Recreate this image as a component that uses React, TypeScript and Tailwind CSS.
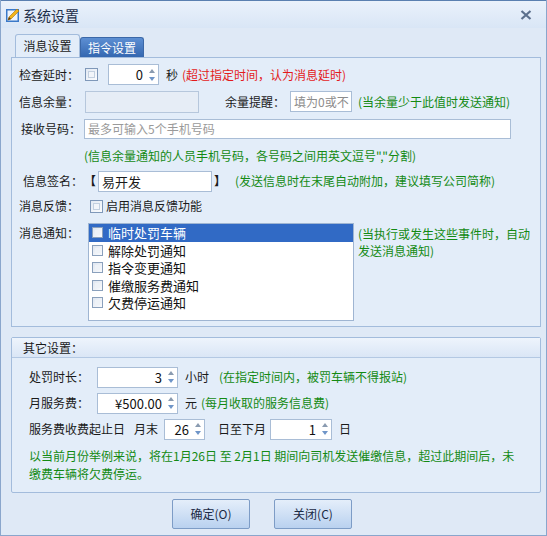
import React from 'react';

function Arrows() {
  return (
    <svg width="8" height="14" viewBox="0 0 8 14">
      <path d="M4 1 L7 5 L1 5 Z" fill="#8a9bb0" />
      <path d="M4 13 L7 9 L1 9 Z" fill="#6f95c8" />
    </svg>
  );
}

function Spin({ value, wClass }: { value: string; wClass: string }) {
  return (
    <div className={`flex h-[21px] items-stretch border border-[#a9bdd6] bg-white ${wClass}`}>
      <div className="flex flex-1 items-center justify-end pr-[3px] text-[13px] text-[#111]">{value}</div>
      <div className="flex w-[12px] items-center justify-center">
        <Arrows />
      </div>
    </div>
  );
}

function Check({ size }: { size: 'lg' | 'sm' }) {
  return size === 'lg' ? (
    <div className="flex h-[13px] w-[13px] items-center justify-center border border-[#7f98b9] bg-gradient-to-br from-[#e2e9f3] to-[#fbfcfe]">
      <div className="h-[7px] w-[7px] border border-[#c3d0e0] bg-[#f2f5fa]" />
    </div>
  ) : (
    <div className="flex h-[11px] w-[11px] items-center justify-center border border-[#8aa0bc] bg-gradient-to-br from-[#dfe6f0] to-[#fafbfd]">
      <div className="h-[5px] w-[5px] bg-[#eef2f7]" />
    </div>
  );
}

export default function App() {
  const items = ['临时处罚车辆', '解除处罚通知', '指令变更通知', '催缴服务费通知', '欠费停运通知'];
  return (
    <div className="relative h-[536px] w-[547px] overflow-hidden border-x border-b border-[#8aa6cc] bg-[#dfe9f6] font-['Noto_Sans_CJK_SC','Noto_Sans',sans-serif] text-[12px] leading-none text-[#1a1a1a]">
      {/* title bar */}
      <div className="flex h-[28px] items-center border-t border-[#5a7fb0] bg-gradient-to-b from-[#eaf1fb] to-[#d9e6f6] pl-[4px] pr-[14px]">
        <svg width="16" height="16" viewBox="0 0 16 16">
          <rect x="1" y="2" width="13" height="13" fill="#3a79c9" />
          <rect x="2.5" y="3.5" width="10" height="10" fill="#eef4fb" />
          <path d="M3 13 L4 10 L12 2 L14 4 L6 12 Z" fill="#f2b418" stroke="#a8700a" strokeWidth="0.6" />
          <path d="M3 13 L4 10 L6 12 Z" fill="#5a3b10" />
        </svg>
        <span className="ml-[2px] text-[14px] text-[#1e2f4a]">系统设置</span>
        <div className="flex-1" />
        <svg width="12" height="10" viewBox="0 0 12 10">
          <path d="M1.5 1 L10.5 9 M10.5 1 L1.5 9" stroke="#5b6f8c" strokeWidth="2.2" />
        </svg>
      </div>

      {/* tabs */}
      <div className="mt-[7px] flex h-[22px] items-end pl-[14px]">
        <div className="relative z-10 flex h-[23px] w-[65px] items-center justify-center rounded-t-[3px] border border-b-0 border-[#a3bcdc] bg-[#e3edf9] text-[12px] text-[#1a1a1a]">
          消息设置
        </div>
        <div className="flex h-[20px] w-[64px] items-center justify-center rounded-t-[3px] border border-b-0 border-[#3b68a8] bg-gradient-to-b from-[#5d8fd3] to-[#3467b0] text-[12px] text-white">
          指令设置
        </div>
      </div>

      {/* tab panel */}
      <div className="ml-[10px] h-[270px] w-[530px] border border-[#a3bcdc] bg-[#e3edf9] pl-[7px]">
        <div className="mt-[3px] flex h-[27px] items-center">
          <div className="w-[66px]">检查延时：</div>
          <Check size="lg" />
          <div className="ml-[10px]">
            <Spin value="0" wClass="w-[51px]" />
          </div>
          <span className="ml-[7px]">秒</span>
          <span className="ml-[4px] text-[#e31b1b]">(超过指定时间，认为消息延时)</span>
        </div>
        <div className="flex h-[27px] items-center">
          <div className="w-[66px]">信息余量：</div>
          <div className="h-[22px] w-[114px] border border-[#b6c7dc] bg-[#e6edf6]" />
          <span className="ml-[26px] w-[60px]">余量提醒：</span>
          <div className="ml-[5px] flex h-[21px] w-[62px] items-center whitespace-nowrap border border-[#a9bdd6] bg-white pl-[3px] text-[#8c8c8c]">
            填为0或不
          </div>
          <span className="ml-[6px] text-[#138a13]">(当余量少于此值时发送通知)</span>
        </div>
        <div className="flex h-[27px] items-center">
          <div className="w-[65px] pl-[2px]">接收号码：</div>
          <div className="flex h-[20px] w-[427px] items-center border border-[#a9bdd6] bg-white pl-[3px] text-[#9a9a9a]">
            最多可输入5个手机号码
          </div>
        </div>
        <div className="flex h-[27px] items-center pl-[65px] text-[#138a13]">
          (信息余量通知的人员手机号码，各号码之间用英文逗号&quot;,&quot;分割)
        </div>
        <div className="flex h-[24px] items-center">
          <div className="w-[65px] pl-[4px]">信息签名：</div>
          <span className="w-[14px] font-bold">【</span>
          <div className="flex h-[21px] w-[114px] items-center border border-[#a9bdd6] bg-white pl-[3px] text-[13px]">易开发</div>
          <span className="ml-[2px] w-[18px] font-bold">】</span>
          <span className="ml-[3px] text-[#138a13]">(发送信息时在末尾自动附加，建议填写公司简称)</span>
        </div>
        <div className="flex h-[26px] items-center">
          <div className="w-[71px]">消息反馈：</div>
          <Check size="lg" />
          <span className="ml-[3px]">启用消息反馈功能</span>
        </div>
        <div className="mt-[4px] flex">
          <div className="w-[69px] pt-[4px]">消息通知：</div>
          <div className="h-[98px] w-[266px] border border-[#9fb5d2] bg-white">
            {items.map((t, i) => (
              <div
                key={t}
                className={`flex h-[17.5px] items-center pl-[3px] text-[13px] ${i === 0 ? 'bg-[#316ac5] text-white' : 'text-[#111]'}`}
              >
                <Check size="sm" />
                <span className="ml-[5px]">{t}</span>
              </div>
            ))}
          </div>
          <div className="ml-[4px] pt-[2px] leading-[17px] text-[#138a13]">
            (当执行或发生这些事件时，自动
            <br />
            发送消息通知)
          </div>
        </div>
      </div>

      {/* other settings group */}
      <div className="ml-[10px] mt-[10px] h-[156px] w-[530px] rounded-[2px] border border-[#a3bcdc] bg-[#e3edf9]">
        <div className="flex h-[20px] items-center border-b border-[#b3c8e3] bg-gradient-to-b from-[#eef4fc] to-[#dae6f6] pl-[11px]">
          其它设置：
        </div>
        <div className="pl-[17px]">
          <div className="mt-[6px] flex h-[26px] items-center">
            <div className="w-[68px]">处罚时长：</div>
            <Spin value="3" wClass="w-[81px]" />
            <span className="ml-[7px]">小时</span>
            <span className="ml-[10px] text-[#138a13]">(在指定时间内，被罚车辆不得报站)</span>
          </div>
          <div className="flex h-[26px] items-center">
            <div className="w-[68px]">月服务费：</div>
            <Spin value="¥500.00" wClass="w-[81px]" />
            <span className="ml-[7px]">元</span>
            <span className="ml-[4px] text-[#138a13]">(每月收取的服务信息费)</span>
          </div>
          <div className="flex h-[26px] items-center">
            <span>服务费收费起止日</span>
            <span className="ml-[9px]">月末</span>
            <div className="ml-[6px]">
              <Spin value="26" wClass="w-[41px]" />
            </div>
            <span className="ml-[13px]">日至下月</span>
            <div className="ml-[4px]">
              <Spin value="1" wClass="w-[62px]" />
            </div>
            <span className="ml-[7px]">日</span>
          </div>
          <div className="mt-[5px] pr-[18px] leading-[18px] text-[#138a13]">
            以当前月份举例来说，将在1月26日 至 2月1日 期间向司机发送催缴信息，超过此期间后，未缴费车辆将欠费停运。
          </div>
        </div>
      </div>

      {/* buttons */}
      <div className="mt-[6px] flex gap-[24px] pl-[171px]">
        <button className="h-[30px] w-[78px] rounded-[2px] border border-[#7d9cc6] bg-gradient-to-b from-[#e4eefa] via-[#cfe0f5] to-[#b9d1ef] text-[12px] text-[#1a2a44]">
          确定(O)
        </button>
        <button className="h-[30px] w-[78px] rounded-[2px] border border-[#7d9cc6] bg-gradient-to-b from-[#e4eefa] via-[#cfe0f5] to-[#b9d1ef] text-[12px] text-[#1a2a44]">
          关闭(C)
        </button>
      </div>
    </div>
  );
}
